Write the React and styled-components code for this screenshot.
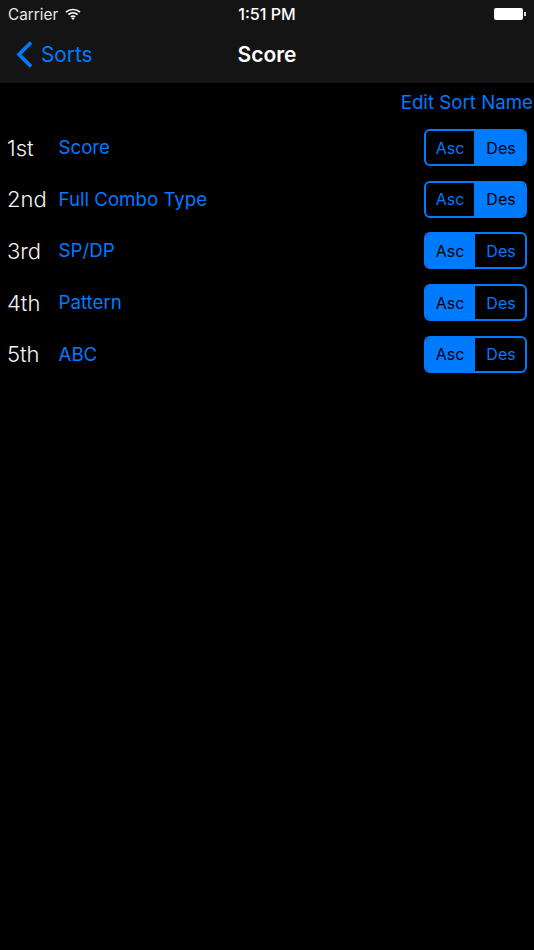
import React from "react";
import styled, { createGlobalStyle } from "styled-components";

const GlobalStyle = createGlobalStyle`
  html, body {
    margin: 0;
    background: #000;
  }
  * {
    box-sizing: border-box;
  }
`;

const Page = styled.div`
  width: 534px;
  height: 950px;
  background: #000;
  overflow: hidden;
  font-family: Inter, "Liberation Sans", sans-serif;
`;

const Header = styled.header`
  height: 83px;
  background: #141414;
`;

const StatusBar = styled.div`
  height: 28px;
  padding: 0 8px;
  display: grid;
  grid-template-columns: 1fr auto 1fr;
  align-items: center;
  color: #fff;
`;

const Carrier = styled.div`
  display: flex;
  align-items: center;
  gap: 7px;
  font-size: 15.3px;
  color: #e8e8e8;
`;

const Clock = styled.div`
  font-size: 16.1px;
  font-weight: 500;
`;

const Battery = styled.div`
  justify-self: end;
  display: flex;
  align-items: center;
  gap: 1px;
  margin-top: -1px;
  &::before {
    content: "";
    width: 29px;
    height: 12px;
    background: #fff;
    border-radius: 2px;
  }
  &::after {
    content: "";
    width: 2px;
    height: 4px;
    background: #ddd;
  }
`;

const NavBar = styled.nav`
  height: 55px;
  padding: 0 16px 2px;
  display: grid;
  grid-template-columns: 1fr auto 1fr;
  align-items: center;
`;

const BackLink = styled.div`
  display: flex;
  align-items: center;
  gap: 8px;
  color: #007aff;
  font-size: 20.8px;
`;

const NavTitle = styled.div`
  color: #fff;
  font-size: 21px;
  font-weight: 600;
`;

const Content = styled.main`
  padding-top: 8px;
`;

const EditLink = styled.div`
  text-align: right;
  color: #007aff;
  font-size: 18.7px;
  line-height: 24px;
  padding-right: 1px;
`;

const SortList = styled.div`
  margin-top: 14px;
  display: flex;
  flex-direction: column;
  gap: 14px;
`;

const Row = styled.div`
  height: 37.6px;
  padding: 0 7px;
  display: flex;
  align-items: center;
`;

const Rank = styled.div`
  width: 51.5px;
  color: #f4f4f4;
  font-size: 22px;
  font-weight: 300;
`;

const SortName = styled.div`
  flex: 1;
  color: #007aff;
  font-size: 18.7px;
`;

const Segmented = styled.div`
  width: 103px;
  height: 37px;
  display: flex;
  border: 2px solid #007aff;
  border-radius: 6px;
  overflow: hidden;
`;

const Segment = styled.div`
  flex: 1;
  display: flex;
  align-items: center;
  justify-content: center;
  font-size: 16px;
  background: ${(p) => (p.$active ? "#007aff" : "transparent")};
  color: ${(p) => (p.$active ? "#000" : "#007aff")};
  &:first-child {
    padding-right: 1px;
    margin-right: -1px;
  }
  &:last-child {
    padding-left: 3px;
  }
`;

const rows = [
  { rank: "1st", name: "Score", active: "Des" },
  { rank: "2nd", name: "Full Combo Type", active: "Des" },
  { rank: "3rd", name: "SP/DP", active: "Asc" },
  { rank: "4th", name: "Pattern", active: "Asc" },
  { rank: "5th", name: "ABC", active: "Asc" },
];

const App = () => {
  return (
    <Page>
      <GlobalStyle />
      <Header>
        <StatusBar>
          <Carrier>
            Carrier
            <svg width="16" height="12" viewBox="0 0 16 12" fill="none" stroke="#fff" strokeWidth="1.7">
              <path d="M1 4.2C5 .6 11 .6 15 4.2" />
              <path d="M3.4 6.6c2.7-2.3 6.5-2.3 9.2 0" />
              <path d="M5.8 8.9c1.3-1 3.1-1 4.4 0" />
              <path d="M8 12l-1.6-1.8c1-.6 2.2-.6 3.2 0z" fill="#fff" stroke="none" />
            </svg>
          </Carrier>
          <Clock>1:51 PM</Clock>
          <Battery />
        </StatusBar>
        <NavBar>
          <BackLink>
            <svg width="17" height="27" viewBox="0 0 17 27" fill="none" stroke="#007aff" strokeWidth="3.6">
              <path d="M15 1.5L3 13.5l12 12" />
            </svg>
            Sorts
          </BackLink>
          <NavTitle>Score</NavTitle>
        </NavBar>
      </Header>
      <Content>
        <EditLink>Edit Sort Name</EditLink>
        <SortList>
          {rows.map((row) => (
            <Row key={row.rank}>
              <Rank>{row.rank}</Rank>
              <SortName>{row.name}</SortName>
              <Segmented>
                <Segment $active={row.active === "Asc"}>Asc</Segment>
                <Segment $active={row.active === "Des"}>Des</Segment>
              </Segmented>
            </Row>
          ))}
        </SortList>
      </Content>
    </Page>
  );
};

export default App;
